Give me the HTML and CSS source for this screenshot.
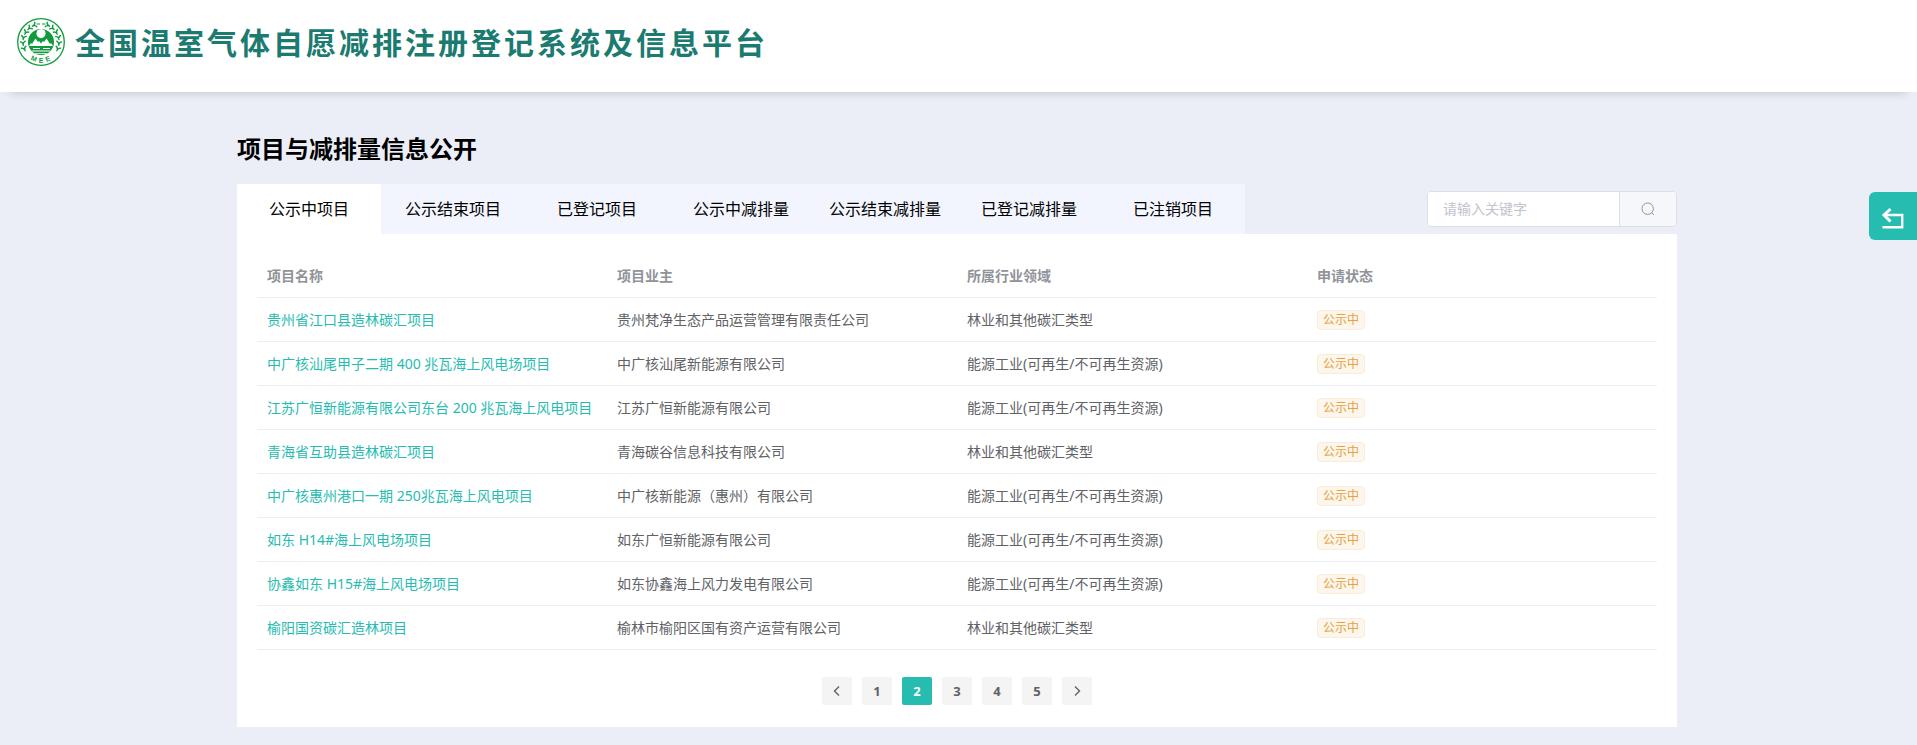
FILE: index.html
```html
<!DOCTYPE html>
<html lang="zh-CN">
<head>
    <meta charset="UTF-8">
    <meta name="viewport" content="width=device-width, initial-scale=1">
    <title>全国温室气体自愿减排注册登记系统及信息平台</title>
    <link rel="stylesheet" href="styles.css">
</head>
<body>
    <header class="header">
        <svg class="logo" viewBox="0 0 48 48" aria-hidden="true">
            <defs>
                <path id="leaf" d="M-3 -2.4 Q-.6 -2.4 0 .6 Q.6 -2.4 3 -2.4 M0 -1.5 V2" fill="none" stroke="#0f9b3c" stroke-width="1.3"/>
                <clipPath id="disc"><circle cx="24" cy="24" r="13"/></clipPath>
            </defs>
            <circle cx="24" cy="24" r="23.3" fill="#fff" stroke="#0f9b3c" stroke-width="1.3"/>
            <g>
                <use href="#leaf" transform="rotate(-114 24 24) translate(24 6) rotate(90)"/>
                <use href="#leaf" transform="rotate(-96 24 24) translate(24 6) rotate(90)"/>
                <use href="#leaf" transform="rotate(-78 24 24) translate(24 6) rotate(90)"/>
                <use href="#leaf" transform="rotate(-60 24 24) translate(24 6) rotate(90)"/>
                <use href="#leaf" transform="rotate(-42 24 24) translate(24 6) rotate(90)"/>
                <use href="#leaf" transform="rotate(-24 24 24) translate(24 6) rotate(90)"/>
                <use href="#leaf" transform="rotate(114 24 24) translate(24 6) rotate(-90)"/>
                <use href="#leaf" transform="rotate(96 24 24) translate(24 6) rotate(-90)"/>
                <use href="#leaf" transform="rotate(78 24 24) translate(24 6) rotate(-90)"/>
                <use href="#leaf" transform="rotate(60 24 24) translate(24 6) rotate(-90)"/>
                <use href="#leaf" transform="rotate(42 24 24) translate(24 6) rotate(-90)"/>
                <use href="#leaf" transform="rotate(24 24 24) translate(24 6) rotate(-90)"/>
                <path d="M19.5 6 h3.5 M25 6 h3.5" stroke="#0f9b3c" stroke-width="1.2"/>
            </g>
            <circle cx="24" cy="24" r="13" fill="#0f9b3c"/>
            <g clip-path="url(#disc)" fill="#fff">
                <circle cx="24" cy="15.6" r="4.6"/>
                <path d="M12 28 L14 25 L15 26 L18.5 20.5 L21 24 L22 23 L24 25.5 L26 23 L27 24 L29.5 20.5 L33 26 L34 25 L36 28Z"/>
                <path d="M16 30h7v1h-7z M26 30h7v1h-7z M15 32.6h18v1h-18z M18 35h12v.8h-12z"/>
            </g>
            <g class="logo-text">
                <text x="24" y="44.5" transform="rotate(23 24 24)">M</text>
                <text x="24" y="44.5">E</text>
                <text x="24" y="44.5" transform="rotate(-22 24 24)">E</text>
            </g>
        </svg>
        <div class="site-name">全国温室气体自愿减排注册登记系统及信息平台</div>
    </header>

    <main class="page">
        <h1>项目与减排量信息公开</h1>
        <div class="toolbar">
            <nav class="tabs">
                <button type="button" class="tab active">公示中项目</button>
                <button type="button" class="tab">公示结束项目</button>
                <button type="button" class="tab">已登记项目</button>
                <button type="button" class="tab">公示中减排量</button>
                <button type="button" class="tab">公示结束减排量</button>
                <button type="button" class="tab">已登记减排量</button>
                <button type="button" class="tab">已注销项目</button>
            </nav>
            <form class="search">
                <input type="text" name="keyword" placeholder="请输入关键字" aria-label="请输入关键字">
                <button type="button" aria-label="搜索">
                    <svg width="14" height="14" viewBox="0 0 14 14" fill="none" stroke="currentColor"><circle cx="6.7" cy="6.7" r="5.7"/><path d="M10.8 10.8 L13 13"/></svg>
                </button>
            </form>
        </div>

        <div class="panel">
            <table>
                <thead>
                    <tr><th>项目名称</th><th>项目业主</th><th>所属行业领域</th><th>申请状态</th></tr>
                </thead>
                <tbody>
                    <tr>
                        <td><a href="#">贵州省江口县造林碳汇项目</a></td>
                        <td>贵州梵净生态产品运营管理有限责任公司</td>
                        <td>林业和其他碳汇类型</td>
                        <td><span class="tag">公示中</span></td>
                    </tr>
                    <tr>
                        <td><a href="#">中广核汕尾甲子二期 400 兆瓦海上风电场项目</a></td>
                        <td>中广核汕尾新能源有限公司</td>
                        <td>能源工业(可再生/不可再生资源)</td>
                        <td><span class="tag">公示中</span></td>
                    </tr>
                    <tr>
                        <td><a href="#">江苏广恒新能源有限公司东台 200 兆瓦海上风电项目</a></td>
                        <td>江苏广恒新能源有限公司</td>
                        <td>能源工业(可再生/不可再生资源)</td>
                        <td><span class="tag">公示中</span></td>
                    </tr>
                    <tr>
                        <td><a href="#">青海省互助县造林碳汇项目</a></td>
                        <td>青海碳谷信息科技有限公司</td>
                        <td>林业和其他碳汇类型</td>
                        <td><span class="tag">公示中</span></td>
                    </tr>
                    <tr>
                        <td><a href="#">中广核惠州港口一期 250兆瓦海上风电项目</a></td>
                        <td>中广核新能源（惠州）有限公司</td>
                        <td>能源工业(可再生/不可再生资源)</td>
                        <td><span class="tag">公示中</span></td>
                    </tr>
                    <tr>
                        <td><a href="#">如东 H14#海上风电场项目</a></td>
                        <td>如东广恒新能源有限公司</td>
                        <td>能源工业(可再生/不可再生资源)</td>
                        <td><span class="tag">公示中</span></td>
                    </tr>
                    <tr>
                        <td><a href="#">协鑫如东 H15#海上风电场项目</a></td>
                        <td>如东协鑫海上风力发电有限公司</td>
                        <td>能源工业(可再生/不可再生资源)</td>
                        <td><span class="tag">公示中</span></td>
                    </tr>
                    <tr>
                        <td><a href="#">榆阳国资碳汇造林项目</a></td>
                        <td>榆林市榆阳区国有资产运营有限公司</td>
                        <td>林业和其他碳汇类型</td>
                        <td><span class="tag">公示中</span></td>
                    </tr>
                </tbody>
            </table>

            <div class="pagination">
                <button type="button" aria-label="上一页">
                    <svg width="12" height="12" viewBox="0 0 12 12" fill="none" stroke="currentColor" stroke-width="1.4"><path d="M8 1.5 L3.5 6 L8 10.5"/></svg>
                </button>
                <button type="button">1</button>
                <button type="button" class="current">2</button>
                <button type="button">3</button>
                <button type="button">4</button>
                <button type="button">5</button>
                <button type="button" aria-label="下一页">
                    <svg width="12" height="12" viewBox="0 0 12 12" fill="none" stroke="currentColor" stroke-width="1.4"><path d="M4 1.5 L8.5 6 L4 10.5"/></svg>
                </button>
            </div>
        </div>
    </main>

    <button type="button" class="back" aria-label="返回">
        <svg width="24" height="24" viewBox="0 0 24 24" fill="none" stroke="#fff"><path stroke-width="3" d="M9.5 2 L3 8 L9.5 14.5"/><path stroke-width="2.4" d="M3.5 8 H21.2 V20.2 H1.5"/></svg>
    </button>
</body>
</html>
```

FILE: styles.css
```css
* { box-sizing: border-box; }
body { margin: 0; background: #ebeef7; color: #606266; font: 14px/20px "Noto Sans", "Noto Sans CJK SC", sans-serif; }
button, input { font: inherit; color: inherit; border: none; padding: 0; margin: 0; }
button { cursor: pointer; }

/* header */
.header { display: flex; align-items: center; gap: 10px; padding: 18px 17px 26px; background: #fff; box-shadow: 0 10px 10px -10px rgba(0, 0, 0, 0.2); }
.logo { width: 48px; height: 48px; flex: none; }
.logo-text { font: bold 7px "Liberation Sans", sans-serif; fill: #0f9b3c; text-anchor: middle; }
.site-name { padding-top: 2px; color: #1b7b70; font-size: 30px; line-height: 46px; font-weight: bold; letter-spacing: 3px; white-space: nowrap; }

/* content */
.page { padding: 39px 240px 18px 237px; }
h1 { margin: 0 0 17px; color: #000; font-size: 24px; line-height: 36px; }
.toolbar { display: flex; justify-content: space-between; align-items: center; }
.tabs { display: flex; background: #f2f5fd; }
.tab { width: 144px; height: 50px; background: none; color: #000; font-size: 16px; text-align: center; white-space: nowrap; }
.tab.active { background: #fff; }
.search { display: flex; width: 250px; height: 36px; border: 1px solid #dcdfe6; border-radius: 4px; overflow: hidden; background: #fff; }
.search input { flex: 1; min-width: 0; padding: 0 15px; background: #fff; outline: none; }
.search input::placeholder { color: #c0c4cc; opacity: 1; }
.search button { display: flex; align-items: center; justify-content: center; width: 57px; background: #f5f7fa; border-left: 1px solid #dcdfe6; color: #909399; }

.panel { padding: 20px 20px 22px; background: #fff; }
table { width: 100%; table-layout: fixed; border-collapse: separate; border-spacing: 0; }
th, td { height: 44px; padding: 0 10px; border-bottom: 1px solid #ebeef5; text-align: left; vertical-align: middle; white-space: nowrap; }
th { color: #909399; font-weight: bold; }
td a { color: #26bcb0; text-decoration: none; }
td a:hover { text-decoration: underline; }
.tag { display: inline-block; height: 20px; padding: 0 5px; border: 1px solid #faecd8; border-radius: 4px; background: #fdf6ec; color: #e6a23c; font-size: 12px; line-height: 18px; vertical-align: middle; }

.pagination { display: flex; justify-content: center; gap: 10px; padding-top: 27px; }
.pagination button { display: flex; align-items: center; justify-content: center; width: 30px; height: 28px; border-radius: 2px; background: #f4f4f5; font-size: 13px; font-weight: bold; }
.pagination .current { background: #26bcb0; color: #fff; }

/* floating back button */
.back { position: fixed; top: 192px; right: 0; display: flex; align-items: center; justify-content: center; width: 48px; height: 48px; padding-top: 6px; border-radius: 6px 0 0 6px; background: #26bcb0; }
```
